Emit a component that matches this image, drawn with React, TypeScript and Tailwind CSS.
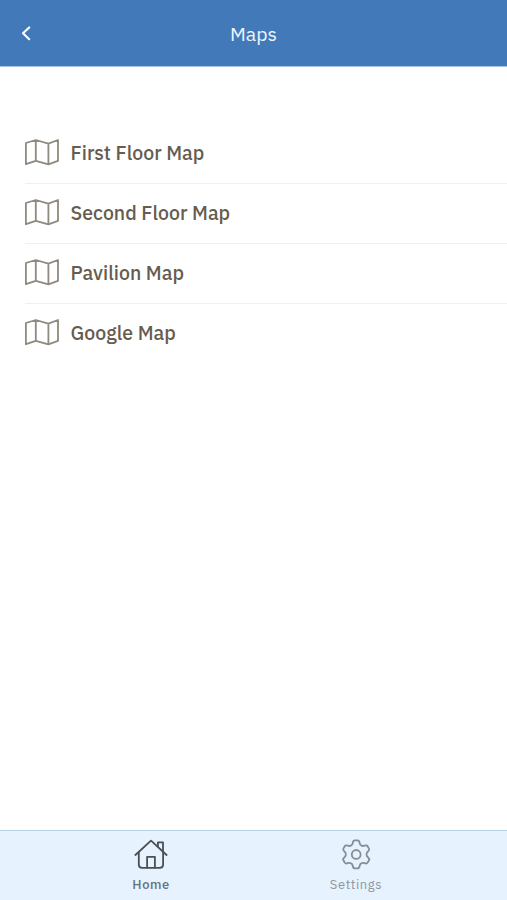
import type { ReactNode } from 'react';

interface MapItem {
  id: string;
  title: string;
}

const maps: MapItem[] = [
  { id: 'first', title: 'First Floor Map' },
  { id: 'second', title: 'Second Floor Map' },
  { id: 'pavilion', title: 'Pavilion Map' },
  { id: 'google', title: 'Google Map' },
];

// Six rounded teeth around the origin
function gearPath() {
  const parts: string[] = [];
  for (let i = 0; i < 6; i++) {
    const a = (i * Math.PI) / 3;
    const p = (x: number, y: number) =>
      `${(x * Math.cos(a) - y * Math.sin(a)).toFixed(2)} ${(x * Math.sin(a) + y * Math.cos(a)).toFixed(2)}`;
    parts.push(`${i === 0 ? 'M' : 'L'}${p(-5.1, -9)}`);
    parts.push(`C${p(-3.9, -9.5)} ${p(-3.6, -10.2)} ${p(-3.4, -11.6)}`);
    parts.push(`C${p(-3.1, -13.4)} ${p(-2.7, -14)} ${p(-1.4, -14)}`);
    parts.push(`L${p(1.4, -14)}`);
    parts.push(`C${p(2.7, -14)} ${p(3.1, -13.4)} ${p(3.4, -11.6)}`);
    parts.push(`C${p(3.6, -10.2)} ${p(3.9, -9.5)} ${p(5.1, -9)}`);
  }
  return parts.join(' ') + 'Z';
}

function MapIcon() {
  return (
    <svg width="35" height="28" viewBox="1 0 35 28" fill="none" stroke="#8f897f" strokeWidth="1.8" strokeLinejoin="round" className="mb-[3px] shrink-0">
      <path d="M1.9 5 11.8 2 24.4 5.6 34 2v20.8l-9.6 3.5-12.6-3.5-9.9 3.4ZM11.8 2v20.8M24.4 5.6v20.7" />
    </svg>
  );
}

function HomeIcon() {
  return (
    <svg width="36" height="32" viewBox="0 0 36 32" fill="none" stroke="#4a4f54" strokeWidth="1.8" strokeLinejoin="round" strokeLinecap="round">
      <path d="M2.4 16 18 1.6 33.6 16" />
      <path d="M5.8 13.2v12.3q0 3.3 3.3 3.3h17.7q3.3 0 3.3-3.3V13.2" />
      <path d="M14.1 28.5V17.8h7.8v10.7M24.9 7.6V3.4h5.1v8.8" />
    </svg>
  );
}

function SettingsIcon() {
  return (
    <svg width="36" height="32" viewBox="-18.2 -15.4 36 32" fill="none" stroke="#858e96" strokeWidth="1.8" strokeLinejoin="round">
      <path d={gearPath()} />
      <circle r="4.4" />
    </svg>
  );
}

function Tab({ label, className, children }: { label: string; className: string; children: ReactNode }) {
  return (
    <button className={`flex w-[205px] flex-col items-center pt-2 text-[13px] leading-[18px] ${className}`}>
      {children}
      <span className="mt-[5px]">{label}</span>
    </button>
  );
}

export default function App() {
  return (
    <div className="flex h-screen flex-col overflow-hidden bg-white font-['IBM_Plex_Sans','Noto_Sans',sans-serif]">
      {/* Header */}
      <header className="grid h-[67px] shrink-0 grid-cols-[1fr_auto_1fr] items-center border-b border-[#a9c5e3] bg-[#4279b9] text-white">
        <button aria-label="Back" className="ml-5 w-3">
          <svg width="12" height="16" viewBox="0 0 12 16" fill="none" stroke="currentColor" strokeWidth="2.1" strokeLinecap="round" strokeLinejoin="round">
            <path d="M9.2 2.4 3 8.3l6.2 5.9" />
          </svg>
        </button>
        <h1 className="pt-px text-[19.5px] text-[#edf6ff]">Maps</h1>
      </header>

      {/* Map list */}
      <main className="flex-1 pt-[57px] pl-[25px]">
        <ul>
          {maps.map((map) => (
            <li key={map.id} className="flex h-[60px] items-center gap-[10.6px] border-b border-[#f0f0f0] text-[#665c4f] last:border-transparent">
              <MapIcon />
              <span className="pb-px text-[19.5px] leading-7 font-medium">{map.title}</span>
            </li>
          ))}
        </ul>
      </main>

      {/* Tab bar */}
      <nav className="flex h-[70px] shrink-0 justify-center border-t border-[#b8d2e5] bg-[#e6f2fe]">
        <Tab label="Home" className="font-medium tracking-[0.5px] text-[#687077]">
          <HomeIcon />
        </Tab>
        <Tab label="Settings" className="tracking-[0.6px] text-[#8e979f]">
          <SettingsIcon />
        </Tab>
      </nav>
    </div>
  );
}
